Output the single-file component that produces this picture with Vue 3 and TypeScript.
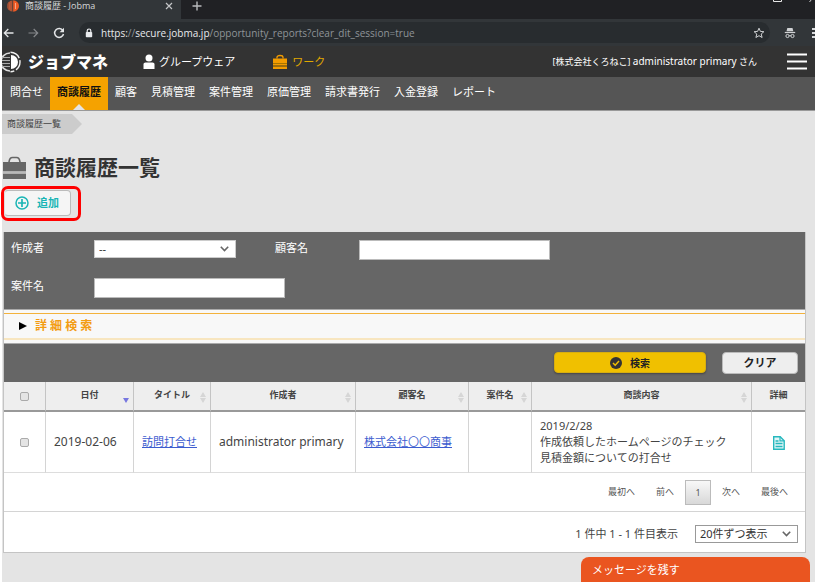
<script setup lang="ts">
import { ref } from 'vue'

interface Report {
  id: number
  date: string
  title: string
  author: string
  customer: string
  project: string
  content: string[]
}

interface Column {
  key: string
  label: string
  sort: 'none' | 'both' | 'desc'
}

const navItems = ['問合せ', '商談履歴', '顧客', '見積管理', '案件管理', '原価管理', '請求書発行', '入金登録', 'レポート']
const activeNav = '商談履歴'

const columns: Column[] = [
  { key: 'date', label: '日付', sort: 'desc' },
  { key: 'title', label: 'タイトル', sort: 'both' },
  { key: 'author', label: '作成者', sort: 'both' },
  { key: 'customer', label: '顧客名', sort: 'both' },
  { key: 'project', label: '案件名', sort: 'both' },
  { key: 'content', label: '商談内容', sort: 'both' },
  { key: 'detail', label: '詳細', sort: 'none' },
]

const reports: Report[] = [
  {
    id: 1,
    date: '2019-02-06',
    title: '訪問打合せ',
    author: 'administrator primary',
    customer: '株式会社〇〇商事',
    project: '',
    content: ['2019/2/28', '作成依頼したホームページのチェック', '見積金額についての打合せ'],
  },
]

const author = ref('')
const customerName = ref('')
const projectName = ref('')
const perPage = ref('20')
const allChecked = ref(false)
const checked = ref<number[]>([])

function clearSearch() {
  author.value = ''
  customerName.value = ''
  projectName.value = ''
}
</script>

<template>
  <div class="page" lang="ja">
    <div class="tab-strip">
      <div class="tab">
        <svg class="favicon" width="12" height="12" viewBox="0 0 12 12" aria-hidden="true">
          <path d="M5.600 .2A5.800 5.800 0 0 0 5.600 11.800Z" fill="#8a4a35" />
          <path d="M2.200 2.200v7.600M4 1v10" stroke="#e8663a" stroke-width=".8" />
          <path d="M6.200 .2A5.800 5.800 0 0 1 6.200 11.800Z" fill="#ee5a24" />
          <path d="M8.500 3v6" stroke="#f6b79f" stroke-width=".8" />
        </svg>
        <span class="tab-title">商談履歴 - Jobma</span>
        <button class="plain" type="button" aria-label="タブを閉じる">
          <svg width="8" height="8" viewBox="0 0 8 8"><path d="M1 1l6 6M7 1L1 7" stroke="#c4c6c8" stroke-width="1.200" /></svg>
        </button>
      </div>
      <button class="plain new-tab" type="button" aria-label="新しいタブ">
        <svg width="10" height="10" viewBox="0 0 10 10"><path d="M5 .5v9M.5 5h9" stroke="#b9bbbd" stroke-width="1.400" /></svg>
      </button>
      <svg class="window-controls" width="42" height="4" viewBox="0 0 42 4" aria-hidden="true">
        <path d="M.5 0v1.500h8V0" fill="none" stroke="#e8e8e8" />
        <path d="M36.500 2l2-2.500" stroke="#ccc" />
      </svg>
    </div>

    <div class="address-row">
      <button class="plain" type="button" aria-label="戻る">
        <svg width="11" height="10" viewBox="0 0 11 10"><path d="M10.500 5H1.500M5.300 1L1.300 5l4 4" fill="none" stroke="#e4e6e8" stroke-width="1.300" /></svg>
      </button>
      <button class="plain" type="button" aria-label="進む">
        <svg width="11" height="10" viewBox="0 0 11 10"><path d="M.5 5h9M5.700 1l4 4-4 4" fill="none" stroke="#85888b" stroke-width="1.200" /></svg>
      </button>
      <button class="plain" type="button" aria-label="再読み込み">
        <svg width="12" height="12" viewBox="0 0 12 12">
          <path d="M9.900 3.500A4.500 4.500 0 1 0 10.500 7" fill="none" stroke="#e4e6e8" stroke-width="1.500" />
          <path d="M11 .8v4.400H6.600z" fill="#e4e6e8" />
        </svg>
      </button>
      <div class="omnibox">
        <svg width="8" height="10" viewBox="0 0 8 10" aria-hidden="true">
          <path d="M2.200 4.500V2.800a1.800 1.800 0 0 1 3.600 0v1.700" fill="none" stroke="#e8eaed" stroke-width="1.200" />
          <rect x=".8" y="4" width="6.400" height="5.200" rx=".8" fill="#e8eaed" />
        </svg>
        <span class="url"><b>https:</b>//<b>secure.jobma.jp</b>/opportunity_reports?clear_dit_session=true</span>
        <svg class="star" width="12" height="12" viewBox="0 0 12 12" aria-hidden="true">
          <path d="M6 1.200l1.400 3.200 3.500.3-2.700 2.300.9 3.500L6 8.700l-3.100 1.800.9-3.500L1.100 4.700l3.500-.3z" fill="none" stroke="#cfd1d3" />
        </svg>
      </div>
      <svg width="12" height="12" viewBox="0 0 12 12" aria-hidden="true">
        <path d="M3.300 1h5.200l.8 3.300H2.500z" fill="#d0d2d4" />
        <path d="M.8 5.500h10.400" stroke="#d0d2d4" stroke-width="1.200" />
        <g fill="none" stroke="#d0d2d4"><circle cx="3.500" cy="9" r="1.600" /><circle cx="8.500" cy="9" r="1.600" /><path d="M5.100 8.700h1.800" /></g>
      </svg>
      <svg class="kebab" width="3" height="12" viewBox="0 0 3 12" aria-hidden="true">
        <path d="M0 1h3v2H0zM0 5h3v2H0zM0 9h3v2H0z" fill="#d8dadc" />
      </svg>
    </div>

    <header class="app-header">
      <a class="brand" href="#">
        <svg width="20" height="22" viewBox="0 0 20 22" aria-hidden="true">
          <path d="M8 2A9 9 0 0 0 8 20" fill="none" stroke="#ddd" stroke-width="1.600" />
          <path d="M0 6.500h8M0 9.500h8M0 12.500h8M0 15.500h8" stroke="#aaa" stroke-width="1.200" />
          <path d="M9 4A7 7 0 0 1 9 18Z" fill="#fff" />
          <path d="M8.500 1.300A9.700 9.700 0 0 1 18 11 9.700 9.700 0 0 1 8.500 20.700" fill="none" stroke="#f2f2f2" stroke-width="1.400" stroke-dasharray="11 2" />
        </svg>
        <span class="brand-name">ジョブマネ</span>
      </a>
      <nav class="modules">
        <a class="module" href="#">
          <svg width="12" height="16" viewBox="0 0 12 16" aria-hidden="true">
            <circle cx="6" cy="4" r="3.500" fill="#fff" />
            <path d="M.5 15v-5Q.5 8.500 2.500 8.500h7q2 0 2 1.500v5z" fill="#fff" />
          </svg>
          <span>グループウェア</span>
        </a>
        <a class="module current" href="#">
          <svg width="14" height="16" viewBox="0 0 14 16" aria-hidden="true">
            <path d="M4 4.500V3.300Q4 1.500 7 1.500t3 1.800v1.200" fill="none" stroke="#f39c00" stroke-width="1.300" />
            <path d="M0 4.500h14V9H0zM0 10h14v1.500H0zM0 12.500h14V15H0z" fill="#f39c00" />
            <path d="M0 9h14v1H0zM0 11.500h14v1H0z" fill="#a87400" />
          </svg>
          <span>ワーク</span>
        </a>
      </nav>
      <p class="user">[株式会社くろねこ] <span class="user-latin">administrator primary</span> さん</p>
      <button class="plain burger" type="button" aria-label="メニュー">
        <svg width="20" height="17" viewBox="0 0 20 17"><path d="M0 1.500h20M0 8.500h20M0 15.500h20" stroke="#fff" stroke-width="2" /></svg>
      </button>
    </header>

    <nav class="main-nav">
      <a v-for="item in navItems" :key="item" href="#" :class="{ active: item === activeNav }">{{ item }}</a>
    </nav>

    <main class="body">
      <div class="crumbs"><a class="crumb" href="#">商談履歴一覧</a></div>

      <div class="heading">
        <svg width="23" height="23" viewBox="0 0 23 23" aria-hidden="true">
          <path d="M6 6Q6.500 1.500 9.500 1.500h4Q16.500 1.500 17 6" fill="none" stroke="#666" stroke-width="1.600" />
          <path d="M0 6h23v9.500H0zM0 17.500h23V23H0z" fill="#666" />
          <path d="M0 15.500h23v2H0z" fill="#b8b8b8" />
        </svg>
        <h1>商談履歴一覧</h1>
      </div>

      <div class="highlight">
        <button class="add" type="button">
          <svg width="14" height="14" viewBox="0 0 14 14" aria-hidden="true">
            <circle cx="7" cy="7" r="6" fill="none" stroke="#1ab5b5" stroke-width="1.500" />
            <path d="M7 3v8M3 7h8" stroke="#1ab5b5" stroke-width="1.700" />
          </svg>
          <span>追加</span>
        </button>
      </div>

      <section class="panel">
        <form @submit.prevent>
          <div class="filters">
            <label for="author">作成者</label>
            <div class="select author-select">
              <select id="author" v-model="author"><option value="">--</option></select>
              <svg width="9" height="6" viewBox="0 0 9 6" aria-hidden="true"><path d="M.8 .8L4.500 4.500 8.200 .8" fill="none" stroke="#666" stroke-width="1.600" /></svg>
            </div>
            <label for="customer">顧客名</label>
            <input id="customer" v-model="customerName" class="text" type="text">
            <label for="project">案件名</label>
            <input id="project" v-model="projectName" class="text" type="text">
          </div>
          <div class="advanced">
            <button class="plain advanced-toggle" type="button">
              <svg width="8" height="8" viewBox="0 0 8 8" aria-hidden="true"><path d="M0 0l8 4-8 4z" fill="#000" /></svg>
              <span>詳 細 検 索</span>
            </button>
          </div>
          <div class="actions">
            <button class="search" type="submit">
              <svg width="12" height="12" viewBox="0 0 12 12" aria-hidden="true">
                <circle cx="6" cy="6" r="6" fill="#333" />
                <path d="M3 6l2.200 2.200L9 4" fill="none" stroke="#f0c000" stroke-width="1.500" />
              </svg>
              <span>検索</span>
            </button>
            <button class="clear" type="button" @click="clearSearch">クリア</button>
          </div>
        </form>

        <table>
          <colgroup>
            <col class="c-check"><col class="c-date"><col class="c-title"><col class="c-author">
            <col class="c-customer"><col class="c-project"><col><col class="c-detail">
          </colgroup>
          <thead>
            <tr>
              <th><input v-model="allChecked" type="checkbox" aria-label="すべて選択"></th>
              <th v-for="c in columns" :key="c.key">
                <div class="th">
                  <span class="th-label">{{ c.label }}</span>
                  <svg v-if="c.sort === 'both'" width="6" height="11" viewBox="0 0 6 11" aria-hidden="true"><path d="M0 5l3-5 3 5zM0 6l3 5 3-5z" fill="#d6d6d6" /></svg>
                  <svg v-if="c.sort === 'desc'" width="6" height="11" viewBox="0 0 6 11" aria-hidden="true"><path d="M0 6h6l-3 5z" fill="#7777e0" /></svg>
                </div>
              </th>
            </tr>
          </thead>
          <tbody>
            <tr v-for="r in reports" :key="r.id">
              <td class="center"><input v-model="checked" type="checkbox" :value="r.id" aria-label="選択"></td>
              <td class="latin">{{ r.date }}</td>
              <td><a href="#">{{ r.title }}</a></td>
              <td class="latin">{{ r.author }}</td>
              <td><a href="#">{{ r.customer }}</a></td>
              <td>{{ r.project }}</td>
              <td><div v-for="line in r.content" :key="line">{{ line }}</div></td>
              <td class="center">
                <a class="doc" href="#" aria-label="詳細">
                  <svg width="12" height="14" viewBox="0 0 12 14">
                    <path d="M.7 .7h6.500l4 4v8.600H.7z" fill="#e2f6f7" stroke="#27b8be" stroke-width="1.400" />
                    <path d="M7 .7v4.200h4.300" fill="none" stroke="#27b8be" stroke-width="1.200" />
                    <path d="M2.500 5h3M2.500 7.500h7M2.500 10.500h7" stroke="#27b8be" stroke-width="1.400" />
                  </svg>
                </a>
              </td>
            </tr>
          </tbody>
        </table>

        <nav class="pager">
          <a href="#">最初へ</a>
          <a href="#">前へ</a>
          <a class="page-current" href="#">1</a>
          <a href="#">次へ</a>
          <a href="#">最後へ</a>
        </nav>
        <div class="summary">
          <label for="per-page">1 件中 1 - 1 件目表示</label>
          <div class="select">
            <select id="per-page" v-model="perPage"><option value="20">20件ずつ表示</option></select>
            <svg width="9" height="6" viewBox="0 0 9 6" aria-hidden="true"><path d="M.8 .8L4.500 4.500 8.200 .8" fill="none" stroke="#666" stroke-width="1.600" /></svg>
          </div>
        </div>
      </section>
    </main>

    <button class="message" type="button">メッセージを残す</button>
  </div>
</template>

<style>
body {
  margin: 0;
  background: #fff;
}
</style>

<style scoped>
.page {
  box-sizing: border-box;
  display: flex;
  flex-direction: column;
  min-height: 100vh;
  padding: 0 1px 2px 2px;
  font-family: "Noto Sans", "Noto Sans CJK JP", sans-serif;
  font-size: 11px;
  line-height: 16px;
  color: #444;
}
.page * { box-sizing: border-box; }
svg { display: block; flex: none; }
a { color: inherit; text-decoration: none; }
button, input, select { font: inherit; color: inherit; margin: 0; }
button { cursor: pointer; }
.plain { display: flex; align-items: center; padding: 0; border: 0; background: none; }

.tab-strip { position: relative; display: flex; height: 19px; background: #202124; }
.tab {
  display: flex;
  align-items: center;
  width: 179px;
  padding: 0 8px 7px 5px;
  background: #323639;
  color: #d6d8da;
  line-height: 12px;
}
.tab-title { flex: 1; margin-left: 6px; font-family: "Open Sans", "Noto Sans CJK JP", sans-serif; font-size: 9px; white-space: nowrap; }
.new-tab { margin-left: 11px; padding-bottom: 7px; }
.window-controls { position: absolute; top: 0; right: 0; }

.address-row { display: flex; align-items: center; gap: 14px; height: 27px; padding-left: 1px; background: #323639; overflow: hidden; }
.omnibox { display: flex; align-items: center; flex: 1; height: 21px; padding: 0 5px 0 6px; border-radius: 11px; background: #282c2f; color: #8f9498; }
.url { flex: 1; margin-left: 8px; font-family: "Open Sans", sans-serif; font-size: 10px; white-space: nowrap; }
.url b { font-weight: 400; color: #e8eaed; }
.kebab { margin-left: 2px; }

.app-header { display: flex; align-items: center; height: 31px; padding-right: 8px; background: #333; color: #fff; }
.brand { display: flex; align-items: center; gap: 6px; }
.brand-name { font-size: 16px; font-weight: 900; }
.modules { display: flex; gap: 38px; margin-left: 35px; }
.module { display: flex; align-items: center; gap: 5px; }
.module:first-child { gap: 4px; }
.module.current { color: #e0a800; }
.user { flex: 1; margin: 0; text-align: right; font-size: 9px; white-space: nowrap; }
.user-latin { font-size: 10px; }
.burger { margin-left: 30px; }

.main-nav { display: flex; height: 34px; padding-left: 1px; background: #555; border-bottom: 1px solid #999; color: #fff; }
.main-nav a { position: relative; padding: 7px; white-space: nowrap; }
.main-nav .active { background: #f5a200; color: #111; font-weight: 700; }
.main-nav .active::after {
  content: "";
  position: absolute;
  left: 50%;
  bottom: 0;
  border: 6px solid transparent;
  border-top: 0;
  border-bottom-color: #e4e4e4;
  transform: translateX(-50%);
}

.body { flex: 1; padding: 3px 9px 0 1px; background: #e4e4e4; }
.crumbs { display: flex; margin-left: -1px; }
.crumb {
  height: 20px;
  padding: 0 21px 0 5px;
  line-height: 20px;
  font-size: 9px;
  background: #ccc;
  clip-path: polygon(0 0, calc(100% - 10px) 0, 100% 50%, calc(100% - 10px) 100%, 0 100%);
}
.heading { display: flex; align-items: center; gap: 8px; height: 30px; margin-top: 18px; }
h1 { margin: 0; font-size: 21px; line-height: 30px; color: #333; }
.highlight { display: flex; width: 80px; height: 35px; margin: 4px 0 0 -2px; padding: 1px 0 0; border: 3px solid #f00; border-radius: 7px; }
.add {
  display: flex;
  align-items: center;
  gap: 8px;
  width: 67px;
  height: 26px;
  padding: 0 0 0 10px;
  border: 1px solid #bbb;
  border-left-color: #ddd;
  border-radius: 4px;
  background: #f5f5f5;
  color: #1ab5b5;
  font-weight: 700;
}

.panel { margin-top: 11px; border: 1px solid #c4c4c4; border-top: 0; background: #fff; }
.filters {
  display: grid;
  grid-template-columns: 83px 181px 84px 1fr;
  grid-auto-rows: 20px;
  align-items: start;
  row-gap: 18px;
  padding: 8px 7px 11px;
  background: #666;
  color: #fff;
}
.select { display: grid; align-items: center; color: #333; }
.select select, .select svg { grid-area: 1 / 1; }
.select svg { justify-self: end; margin-right: 7px; pointer-events: none; }
.select select { appearance: none; width: 100%; height: 18px; padding: 0 20px 0 4px; border: 1px solid #999; border-radius: 0; background: #fff; line-height: 16px; }
.author-select { width: 142px; }
.author-select select { border-color: #ccc; }
.text { width: 191px; height: 20px; padding: 0 4px; border: 1px solid #bbb; background: #fff; color: #333; }

.advanced { padding: 3px 0; border: solid #aaa; border-width: 1px 0; background: #f8f8f8; }
.advanced-toggle { gap: 8px; width: 100%; height: 27px; padding-left: 15px; border: solid #f3b23c; border-width: 1px 0 2px; border-bottom-color: #f8e6c0; color: #f39c12; font-size: 12px; font-weight: 700; }

.actions { display: flex; justify-content: flex-end; gap: 16px; height: 38px; padding: 8px 7px 0; background: #666; }
.actions button { display: flex; align-items: center; justify-content: center; gap: 8px; padding: 0; border-radius: 4px; font-weight: 700; color: #222; }
.search { width: 152px; height: 21px; border: 1px solid #d8ae10; background: #f0c000; box-shadow: 0 1px 2px #444; font-size: 10px; }
.clear { width: 76px; height: 22px; border: 1px solid #bbb; background: #eee; }

table { width: 100%; border-collapse: separate; border-spacing: 0; table-layout: fixed; }
.c-check { width: 42px; }
.c-date { width: 88px; }
.c-title { width: 77px; }
.c-author { width: 145px; }
.c-customer { width: 113px; }
.c-project { width: 63px; }
.c-detail { width: 53px; }
th { height: 30px; padding: 0; border-right: 1px solid #c4c4c4; border-bottom: 2px solid #999; background: #eee; font-size: 9px; }
.th { display: grid; align-items: center; padding-bottom: 2px; }
.th-label, .th svg { grid-area: 1 / 1; }
.th-label { white-space: nowrap; }
.th svg { justify-self: end; margin: 4px 4px 0 0; }
td { height: 61px; padding: 0 8px; border-right: 1px solid #d4d4d4; border-bottom: 1px solid #ddd; white-space: nowrap; }
th:last-child, td:last-child { border-right: 0; }
td a { color: #3c5ccf; text-decoration: underline; }
.center { padding: 0; text-align: center; }
.latin { font-size: 12px; }
.doc { display: inline-block; vertical-align: middle; }
input[type="checkbox"] {
  appearance: none;
  display: block;
  width: 9px;
  height: 9px;
  margin: 0 auto;
  border: 1px solid #aaa;
  border-radius: 2px;
  background: #e4e4e4;
}
input[type="checkbox"]:checked { background: #3c5ccf; }

.pager { display: flex; align-items: center; justify-content: flex-end; height: 39px; padding-right: 17px; border-bottom: 1px solid #d4d4d4; font-size: 9px; gap: 21px; color: #555; }
.page-current { width: 26px; margin: 0 -10px; border: 1px solid #bbb; background: linear-gradient(#f8f8f8, #d8d8d8); line-height: 23px; text-align: center; }
.summary { display: flex; align-items: center; justify-content: flex-end; gap: 17px; height: 40px; padding: 4px 7px 0 0; }
.summary .select { width: 103px; }

.message {
  position: fixed;
  right: 6px;
  bottom: 2px;
  width: 229px;
  height: 25px;
  padding: 0 11px;
  border: 0;
  border-radius: 8px 8px 0 0;
  background: #ea5520;
  color: #fff;
  text-align: left;
}
</style>
